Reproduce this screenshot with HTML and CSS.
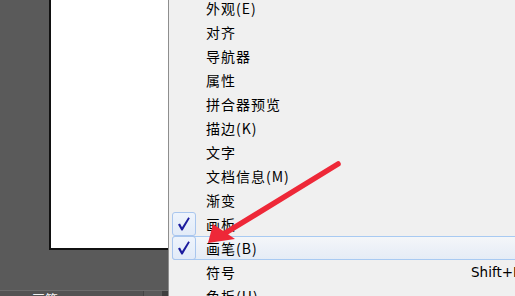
FILE: index.html
```html
<!DOCTYPE html>
<html lang="zh-CN">

<head>
  <meta charset="UTF-8">
  <title>窗口菜单</title>
  <link rel="stylesheet" href="styles.css">
</head>

<body>
  <div class="workspace">
    <div class="doc-area">
      <div class="artboard"></div>
      <div class="panel-bar">
        <span class="panel-tab">画笔</span>
        <span class="panel-btn"></span>
      </div>
    </div>

    <ul class="menu">
      <li class="item"><span class="check"></span><span class="label">外观(E)</span></li>
      <li class="item"><span class="check"></span><span class="label">对齐</span></li>
      <li class="item"><span class="check"></span><span class="label">导航器</span></li>
      <li class="item"><span class="check"></span><span class="label">属性</span></li>
      <li class="item"><span class="check"></span><span class="label">拼合器预览</span></li>
      <li class="item"><span class="check"></span><span class="label">描边(K)</span></li>
      <li class="item"><span class="check"></span><span class="label">文字</span></li>
      <li class="item"><span class="check"></span><span class="label">文档信息(M)</span></li>
      <li class="item"><span class="check"></span><span class="label">渐变</span></li>
      <li class="item checked">
        <span class="check"><svg width="12" height="14" viewBox="0 0 12 14"><polygon points="0,7.5 2,6.5 4,10.2 10.3,0.3 11.8,1.2 4.6,13.6 3.4,13.6" fill="#1c1c9e"/></svg></span>
        <span class="label">画板</span>
      </li>
      <li class="item checked hover">
        <span class="check"><svg width="12" height="14" viewBox="0 0 12 14"><polygon points="0,7.5 2,6.5 4,10.2 10.3,0.3 11.8,1.2 4.6,13.6 3.4,13.6" fill="#1c1c9e"/></svg></span>
        <span class="label">画笔(B)</span>
      </li>
      <li class="item"><span class="check"></span><span class="label">符号</span><span class="key">Shift+F11</span></li>
      <li class="item"><span class="check"></span><span class="label">色板(H)</span></li>
    </ul>
  </div>

  <!-- 红色箭头标注 -->
  <svg class="arrow" width="515" height="296" viewBox="0 0 515 296">
    <line x1="338" y1="164" x2="222" y2="235" stroke="#ee2838" stroke-width="5.5" stroke-linecap="round"/>
    <polygon points="208,243 213,224 235,239" fill="#ee2838"/>
  </svg>
</body>

</html>
```

FILE: styles.css
```css
*{margin: 0; padding: 0; box-sizing: border-box;}
ul{list-style: none;}
html, body{width: 515px; height: 296px; overflow: hidden;}
body{background-color: #5a5a5a; position: relative;}

.workspace{
  display: flex;
  height: 100%;
}

/*문서 영역*/
.doc-area{
  width: 168px;
  flex-shrink: 0;
  display: flex;
  flex-direction: column;
  justify-content: space-between;
}
.artboard{
  height: 250px;
  margin-left: 49px;
  background-color: #fff;
  border-left: 2px solid #111;
  border-bottom: 2px solid #111;
}
.panel-bar{
  height: 6px;
  border-top: 1px solid #6c6c6c;
  background-color: #535353;
  display: flex;
  overflow: hidden;
}
.panel-tab{
  margin-left: 32px;
  font: 13px "Noto Sans CJK SC", sans-serif;
  line-height: 14px;
  color: #f2f2f2;
  margin-top: 1px;
}
.panel-btn{
  margin-left: auto;
  width: 25px;
  border-left: 1px solid #444;
  border-right: 6px solid #3e3e3e;
  background-color: #5a5a5a;
}

/*메뉴*/
.menu{
  width: 420px;
  flex-shrink: 0;
  background-color: #f0f0f0;
  border-left: 1px solid #8e8e8e;
  padding-left: 3px;
  font-family: "Noto Sans CJK SC", "Liberation Sans", sans-serif;
  font-size: 14px;
  color: #000;
  margin-top: -4px;
}
.item{
  height: 24px;
  display: flex;
  align-items: center;
  border: 1px solid transparent;
  border-radius: 3px;
  white-space: nowrap;
}
.check{
  width: 24px;
  height: 24px;
  margin: -1px 0 -1px -1px;
  flex-shrink: 0;
  display: flex;
  align-items: center;
  justify-content: center;
}
.checked .check{
  border: 1px solid #a9c6ee;
  border-radius: 3px;
  background: linear-gradient(#eef4fc, #e2ebf8);
}
.hover{
  border-color: #a8caf2;
  background: linear-gradient(#f4f6f9, #e5ecf6);
}
.label{
  margin-left: 10px;
  letter-spacing: 1px;
  line-height: 24px;
}
.key{
  margin-left: auto;
  width: 116px;
  font-family: "DejaVu Sans", sans-serif;
  font-size: 13.5px;
}

.arrow{
  position: absolute;
  left: 0;
  top: 0;
  pointer-events: none;
}
```
